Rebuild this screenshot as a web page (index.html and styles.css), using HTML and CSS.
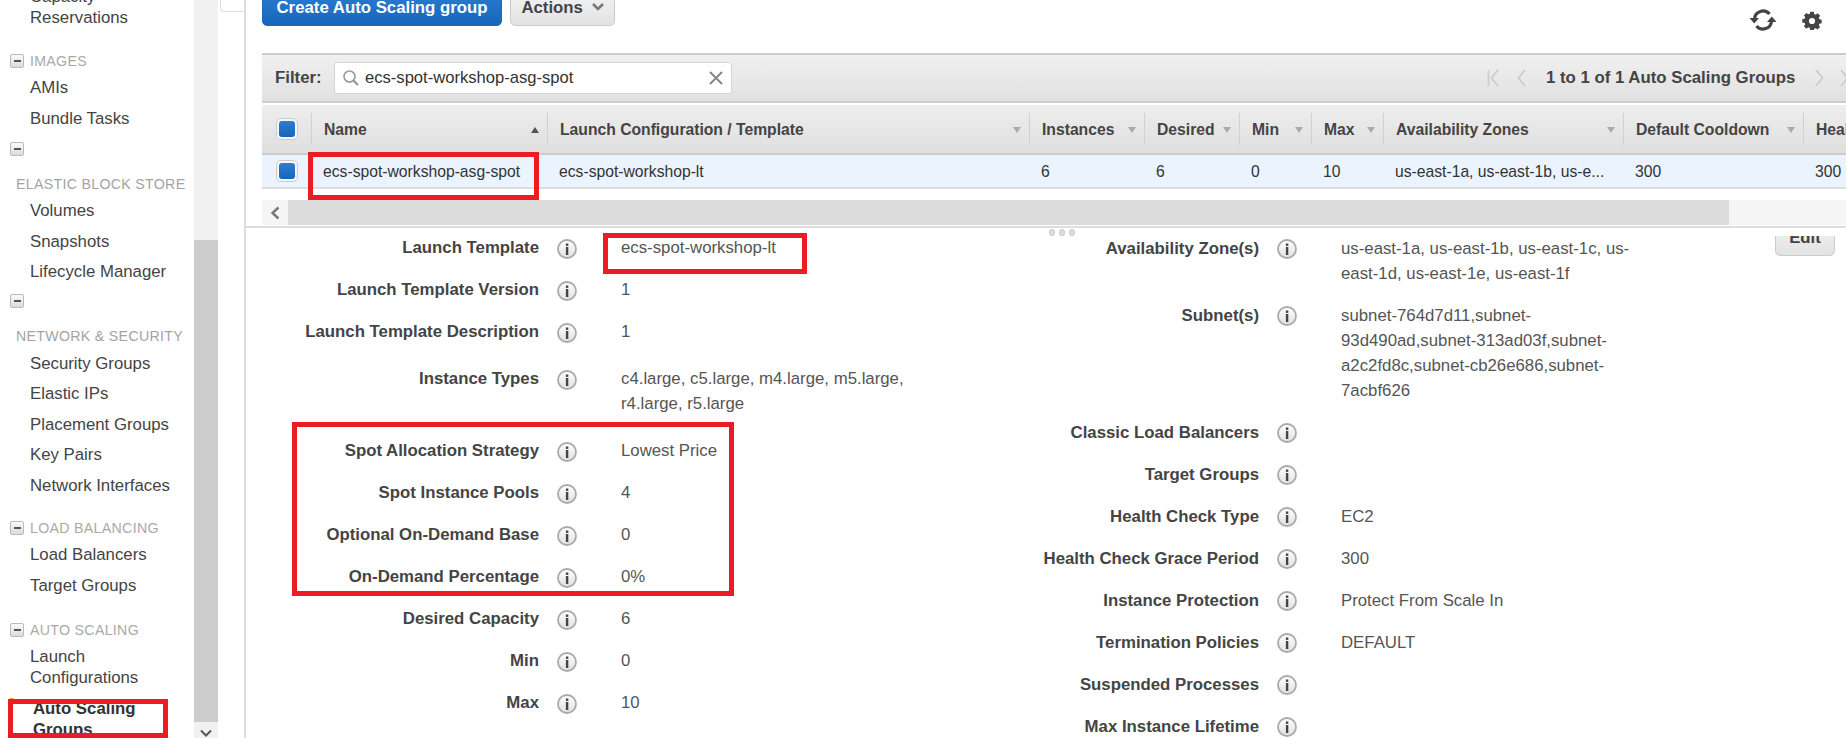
FILE: index.html
```html
<!DOCTYPE html>
<html lang="en">
<head>
<meta charset="utf-8">
<title>Auto Scaling Groups</title>
<link rel="stylesheet" href="styles.css">
</head>
<body>
<svg class="defs" width="0" height="0" aria-hidden="true">
  <defs>
    <linearGradient id="infoFill" x1="0" y1="0" x2="0" y2="1">
      <stop offset="0" stop-color="#ffffff"/>
      <stop offset="1" stop-color="#e0e0e0"/>
    </linearGradient>
    <symbol id="info" viewBox="0 0 20 20">
      <circle cx="10" cy="10" r="9" fill="url(#infoFill)" stroke="#aaaaaa" stroke-width="1.8"/>
      <rect x="8.900" y="4.500" width="2.400" height="2.400" fill="#444"/>
      <rect x="8.900" y="8" width="2.400" height="8" fill="#444"/>
    </symbol>
  </defs>
</svg>
<div class="page">
  <aside class="sidebar">
    <div class="nav">
      <div class="item">Capacity Reservations</div>

      <div class="head sec"><span class="toggle"></span><span class="head-text">IMAGES</span></div>
      <div class="item">AMIs</div>
      <div class="item">Bundle Tasks</div>

      <div class="head sec-empty"><span class="toggle"></span></div>
      <div class="title">ELASTIC BLOCK STORE</div>
      <div class="item">Volumes</div>
      <div class="item">Snapshots</div>
      <div class="item">Lifecycle Manager</div>

      <div class="head sec-tight"><span class="toggle"></span></div>
      <div class="title">NETWORK &amp; SECURITY</div>
      <div class="item">Security Groups</div>
      <div class="item">Elastic IPs</div>
      <div class="item">Placement Groups</div>
      <div class="item">Key Pairs</div>
      <div class="item">Network Interfaces</div>

      <div class="head sec-load"><span class="toggle"></span><span class="head-text">LOAD BALANCING</span></div>
      <div class="item">Load Balancers</div>
      <div class="item">Target Groups</div>

      <div class="head sec-auto"><span class="toggle"></span><span class="head-text">AUTO SCALING</span></div>
      <div class="item">Launch Configurations</div>
      <div class="item active">Auto Scaling Groups</div>
    </div>
  </aside>

  <div class="sidescroll">
    <div class="sidethumb"></div>
    <svg class="sidearrow" width="12" height="8" viewBox="0 0 12 8"><path d="M1 1.5 6 6.5 11 1.5" fill="none" stroke="#555" stroke-width="2"/></svg>
  </div>

  <div class="gutter"><div class="tabcorner"></div></div>

  <main class="main">
    <div class="toolbar">
      <button class="btn primary">Create Auto Scaling group</button>
      <button class="btn secondary">Actions
        <svg class="caret" width="12" height="8" viewBox="0 0 12 8"><path d="M1 1 6 6 11 1" fill="none" stroke="#777" stroke-width="2.6"/></svg>
      </button>
      <div class="tools">
        <svg width="28" height="26" viewBox="0 0 28 26">
          <path d="M5.500 12A8.500 8.500 0 0 1 20.500 7" fill="none" stroke="#444" stroke-width="3.200"/>
          <path d="M22.500 14A8.500 8.500 0 0 1 7.500 19" fill="none" stroke="#444" stroke-width="3.200"/>
          <path d="M0.500 11H10L5.200 16.500Z M18 15H27.500L22.800 9.500Z" fill="#444"/>
        </svg>
        <svg width="20" height="20" viewBox="0 0 20 20">
          <path fill="#444" fill-rule="evenodd" d="M8 1h4l.5 2.6 1.7.7 2.2-1.5 2.8 2.8-1.5 2.2.7 1.7 2.6.5v4l-2.6.5-.7 1.7 1.5 2.2-2.8 2.8-2.2-1.5-1.7.7L12 22H8l-.5-2.6-1.7-.7-2.2 1.5-2.8-2.8 1.5-2.2-.7-1.7L-1 13.500V9.500L1.600 9l.7-1.700L.8 5.100 3.600 2.300l2.200 1.500 1.700-.7zM10 8a3.500 3.500 0 1 0 0 7 3.500 3.500 0 0 0 0-7z" transform="translate(1.200 .9) scale(.88)"/>
        </svg>
      </div>
    </div>

    <div class="filterbar">
      <span class="filter-label">Filter:</span>
      <div class="filter-input">
        <svg width="18" height="18" viewBox="0 0 18 18"><circle cx="7.500" cy="7.500" r="5.500" fill="none" stroke="#999" stroke-width="1.600"/><path d="M11.500 11.500 16 16" stroke="#999" stroke-width="2.400"/></svg>
        <span class="filter-text">ecs-spot-workshop-asg-spot</span>
        <svg class="clear" width="14" height="14" viewBox="0 0 14 14"><path d="M1 1 13 13M13 1 1 13" stroke="#888" stroke-width="2"/></svg>
      </div>
      <div class="pager">
        <svg width="12" height="18" viewBox="0 0 12 18"><path d="M1.500 1V17M11 1 4.500 9 11 17" fill="none" stroke="#ccc" stroke-width="1.800"/></svg>
        <svg class="pg-prev" width="9" height="18" viewBox="0 0 9 18"><path d="M8 1 1.500 9 8 17" fill="none" stroke="#ccc" stroke-width="1.800"/></svg>
        <span class="pager-text">1 to 1 of 1 Auto Scaling Groups</span>
        <svg class="pg-next" width="9" height="18" viewBox="0 0 9 18"><path d="M1 1 7.500 9 1 17" fill="none" stroke="#ccc" stroke-width="1.800"/></svg>
        <svg class="pg-last" width="12" height="18" viewBox="0 0 12 18"><path d="M1 1 7.500 9 1 17M10.500 1V17" fill="none" stroke="#ccc" stroke-width="1.800"/></svg>
      </div>
    </div>

    <div class="grid-row grid-head">
      <div class="cell check"><span class="checkbox"><span class="checkmark"></span></span></div>
      <div class="cell hcell">Name<i class="sort up"></i></div>
      <div class="cell hcell">Launch Configuration / Template<i class="sort"></i></div>
      <div class="cell hcell">Instances<i class="sort"></i></div>
      <div class="cell hcell">Desired<i class="sort"></i></div>
      <div class="cell hcell">Min<i class="sort"></i></div>
      <div class="cell hcell">Max<i class="sort"></i></div>
      <div class="cell hcell">Availability Zones<i class="sort"></i></div>
      <div class="cell hcell">Default Cooldown<i class="sort"></i></div>
      <div class="cell hcell last">Health Check Grace</div>
    </div>
    <div class="grid-row grid-body">
      <div class="cell check"><span class="checkbox"><span class="checkmark"></span></span></div>
      <div class="cell">ecs-spot-workshop-asg-spot</div>
      <div class="cell">ecs-spot-workshop-lt</div>
      <div class="cell">6</div>
      <div class="cell">6</div>
      <div class="cell">0</div>
      <div class="cell">10</div>
      <div class="cell">us-east-1a, us-east-1b, us-e...</div>
      <div class="cell">300</div>
      <div class="cell">300</div>
    </div>

    <div class="hscroll">
      <div class="hscroll-btn"><svg width="10" height="14" viewBox="0 0 10 14"><path d="M8.500 1.500 2.500 7 8.500 12.500" fill="none" stroke="#777" stroke-width="2.400"/></svg></div>
      <div class="hscroll-thumb"></div>
    </div>

    <section class="detail">
      <div class="dots"><i></i><i></i><i></i></div>
      <div class="col col-left">
        <div class="kv"><span class="k">Launch Template</span><span class="ic"><svg><use href="#info"/></svg></span><span class="v">ecs-spot-workshop-lt</span></div>
        <div class="kv"><span class="k">Launch Template Version</span><span class="ic"><svg><use href="#info"/></svg></span><span class="v">1</span></div>
        <div class="kv"><span class="k">Launch Template Description</span><span class="ic"><svg><use href="#info"/></svg></span><span class="v">1</span></div>
        <div class="kv spaced"><span class="k">Instance Types</span><span class="ic"><svg><use href="#info"/></svg></span><span class="v">c4.large, c5.large, m4.large, m5.large,<br>r4.large, r5.large</span></div>
        <div class="kv"><span class="k">Spot Allocation Strategy</span><span class="ic"><svg><use href="#info"/></svg></span><span class="v">Lowest Price</span></div>
        <div class="kv"><span class="k">Spot Instance Pools</span><span class="ic"><svg><use href="#info"/></svg></span><span class="v">4</span></div>
        <div class="kv"><span class="k">Optional On-Demand Base</span><span class="ic"><svg><use href="#info"/></svg></span><span class="v">0</span></div>
        <div class="kv"><span class="k">On-Demand Percentage</span><span class="ic"><svg><use href="#info"/></svg></span><span class="v">0%</span></div>
        <div class="kv"><span class="k">Desired Capacity</span><span class="ic"><svg><use href="#info"/></svg></span><span class="v">6</span></div>
        <div class="kv"><span class="k">Min</span><span class="ic"><svg><use href="#info"/></svg></span><span class="v">0</span></div>
        <div class="kv"><span class="k">Max</span><span class="ic"><svg><use href="#info"/></svg></span><span class="v">10</span></div>
      </div>
      <div class="col col-right">
        <div class="kv"><span class="k">Availability Zone(s)</span><span class="ic"><svg><use href="#info"/></svg></span><span class="v">us-east-1a, us-east-1b, us-east-1c, us-<br>east-1d, us-east-1e, us-east-1f</span></div>
        <div class="kv"><span class="k">Subnet(s)</span><span class="ic"><svg><use href="#info"/></svg></span><span class="v">subnet-764d7d11,subnet-<br>93d490ad,subnet-313ad03f,subnet-<br>a2c2fd8c,subnet-cb26e686,subnet-<br>7acbf626</span></div>
        <div class="kv"><span class="k">Classic Load Balancers</span><span class="ic"><svg><use href="#info"/></svg></span><span class="v"></span></div>
        <div class="kv"><span class="k">Target Groups</span><span class="ic"><svg><use href="#info"/></svg></span><span class="v"></span></div>
        <div class="kv"><span class="k">Health Check Type</span><span class="ic"><svg><use href="#info"/></svg></span><span class="v">EC2</span></div>
        <div class="kv"><span class="k">Health Check Grace Period</span><span class="ic"><svg><use href="#info"/></svg></span><span class="v">300</span></div>
        <div class="kv"><span class="k">Instance Protection</span><span class="ic"><svg><use href="#info"/></svg></span><span class="v">Protect From Scale In</span></div>
        <div class="kv"><span class="k">Termination Policies</span><span class="ic"><svg><use href="#info"/></svg></span><span class="v">DEFAULT</span></div>
        <div class="kv"><span class="k">Suspended Processes</span><span class="ic"><svg><use href="#info"/></svg></span><span class="v"></span></div>
        <div class="kv"><span class="k">Max Instance Lifetime</span><span class="ic"><svg><use href="#info"/></svg></span><span class="v"></span></div>
      </div>
      <div class="edit-clip"><button class="btn secondary edit">Edit</button></div>
    </section>
  </main>

  <div class="mark mark-side"></div>
  <div class="mark mark-name"></div>
  <div class="mark mark-lt"></div>
  <div class="mark mark-spot"></div>
</div>
</body>
</html>
```

FILE: styles.css
```css
* { box-sizing: border-box; }
html, body { margin: 0; padding: 0; background: #fff; }
body { font-family: "Liberation Sans", Arial, sans-serif; font-size: 16.8px; color: #444; }
.defs { position: absolute; }
.page { position: relative; display: flex; width: 1846px; height: 738px; overflow: hidden; }

/* sidebar */
.sidebar { flex: none; width: 194px; overflow: hidden; }
.nav { margin-top: -14.5px; }
.item { padding: 0 8px 0 30px; width: 182px; line-height: 21px; margin-bottom: 9.500px; color: #444; }
.item.active { margin-left: 10px; padding-left: 20px; width: 172px; border-left: 3px solid #f90; font-weight: 700; color: #333; }
.head { display: flex; align-items: center; height: 20px; padding-left: 10px; gap: 6px; margin-bottom: 6.500px; }
.head.sec { margin-top: 23px; }
.head.sec-empty { margin-top: 10px; }
.head.sec-tight { margin-top: -.5px; }
.head.sec-load { margin-top: 22px; }
.head.sec-auto { margin-top: 24px; }
.head-text { font-size: 14.200px; letter-spacing: .3px; color: #aaa; }
.head + .title { margin-top: 15px; }
.title { height: 20px; line-height: 20px; padding-left: 16px; font-size: 14.200px; letter-spacing: .3px; color: #a4a4a4; white-space: nowrap; margin-bottom: 6.500px; }
.toggle { position: relative; flex: none; width: 14px; height: 14px; border: 1px solid #bbb; border-radius: 2px; background: linear-gradient(#fafafa, #dcdcdc); }
.toggle::after { content: ""; position: absolute; left: 2.500px; top: 5px; width: 7px; height: 2px; background: #555; }

.sidescroll { flex: none; width: 24px; background: #f1f1f1; display: flex; flex-direction: column; align-items: center; }
.sidethumb { width: 100%; height: 482px; margin-top: 240px; background: #ccc; }
.sidearrow { margin-top: 7px; }

.gutter { flex: none; width: 26px; }
.tabcorner { height: 12px; margin-left: 2px; border: 1px solid #ddd; border-top: 0; border-right: 0; border-bottom-left-radius: 4px; }

/* main */
.main { flex: 1; min-width: 0; border-left: 2px solid #ddd; padding-left: 16px; overflow: hidden; }
.toolbar { display: flex; align-items: flex-start; height: 53px; gap: 8px; }
.btn { font-family: inherit; font-size: 16.800px; font-weight: 700; height: 36px; margin-top: -10px; border-radius: 5px; padding: 0 14px; white-space: nowrap; cursor: pointer; }
.btn.primary { flex: none; width: 240px; padding: 0; color: #fff; background: linear-gradient(#2d7dd2, #1565ba); border: 1px solid #1a69be; }
.btn.secondary { color: #444; background: linear-gradient(#f4f4f4, #e2e2e2); border: 1px solid #ccc; }
.caret { margin-left: 4px; vertical-align: 2px; }
.toolbar .btn.secondary { flex: none; width: 105px; padding: 0; }
.tools { margin-left: auto; margin-top: 7px; margin-right: 24px; display: flex; align-items: center; gap: 25px; }

.filterbar { display: flex; align-items: center; height: 50px; padding-left: 13px; background: linear-gradient(#f0f0f0, #e1e1e1); border-top: 2px solid #ccc; border-bottom: 2px solid #ccc; }
.filter-label { flex: none; font-weight: 700; width: 59px; }
.filter-input { flex: none; display: flex; align-items: center; width: 398px; height: 32px; padding: 0 8px 0 7px; background: #fff; border: 1px solid #d4d4d4; border-radius: 3px; }
.filter-text { flex: 1; margin-left: 5px; font-size: 16.600px; color: #333; }
.pager { flex: none; display: flex; align-items: center; margin-left: 755px; white-space: nowrap; }
.pg-prev { margin-left: 18px; }
.pager-text { font-weight: 700; margin-left: 20px; width: 250px; }
.pg-next { margin-left: 19px; }
.pg-last { margin-left: 16px; flex: none; }

.grid-row { display: grid; grid-template-columns: 49px 236px 482px 115px 95px 72px 72px 240px 180px 100px; width: 1641px; font-size: 15.700px; }
.grid-head { height: 50px; margin-top: 2px; background: linear-gradient(#eeeeee, #dfdfdf); border-bottom: 2px solid #ccc; font-weight: 700; align-items: center; }
.grid-body { height: 34px; background: #eaf3fe; border-bottom: 2px solid #ddd; align-items: center; color: #333; }
.cell { padding-left: 12px; white-space: nowrap; overflow: hidden; }
.grid-body .cell { padding-top: 1px; }
.grid-body .cell.check, .grid-head .cell.check { padding: 0 0 0 14px; }
.hcell { display: flex; align-items: center; justify-content: space-between; height: 32px; padding-top: 2px; padding-right: 8px; border-left: 1px solid #d0d0d0; }
.hcell.last { justify-content: flex-start; }
.sort { flex: none; width: 0; height: 0; border: 4px solid transparent; border-top: 6px solid #aaa; border-bottom: 0; }
.sort.up { border-top: 0; border-bottom: 6px solid #555; }
.check { display: flex; align-items: center; }
.checkbox { display: flex; align-items: center; justify-content: center; width: 22px; height: 22px; background: #f6f6f6; border: 1px solid #ccc; border-radius: 5px; }
.checkmark { width: 16px; height: 16px; border-radius: 3px; background: linear-gradient(#2d7dd2, #1565ba); }

.hscroll { display: flex; height: 25px; margin-top: 11px; background: #f5f5f5; width: 1584px; }
.hscroll-btn { display: flex; align-items: center; justify-content: center; flex: none; width: 26px; }
.hscroll-thumb { width: 1441px; background: #dbdbdb; }

/* detail */
.detail { position: relative; display: flex; margin: 1px 0 0 -16px; padding: 8px 0 0 16px; border-top: 2px solid #ddd; }
.dots { position: absolute; left: 803px; top: 1px; display: flex; gap: 4px; }
.dots i { width: 6px; height: 7px; border-radius: 50%; background: #ddd; border: 1px solid #ccc; }
.col { flex: none; }
.col-left { width: 708px; margin-top: -1px; }
.col-right { width: 805px; }
.kv { display: grid; line-height: 25px; padding-bottom: 17px; }
.col-left .kv { grid-template-columns: 277px 82px 1fr; }
.col-right .kv { grid-template-columns: 289px 82px 1fr; }
.kv.spaced { margin-top: 5px; margin-bottom: 5px; }
.k { text-align: right; font-weight: 700; color: #444; }
.ic { display: block; padding: 3px 0 0 18px; line-height: 0; }
.col-left .ic { padding-top: 4px; }
.ic svg { width: 20px; height: 20px; }
.v { color: #555; white-space: nowrap; min-height: 25px; }
.edit-clip { flex: none; width: 60px; height: 20px; overflow: hidden; }
.btn.edit { display: block; width: 60px; height: 36px; margin-top: -16px; padding: 0; }

/* red annotation boxes */
.mark { position: absolute; border: 5px solid #ed1c24; }
.mark-side { left: 8px; top: 699px; width: 160px; height: 39px; }
.mark-name { left: 308px; top: 152px; width: 231px; height: 48px; }
.mark-lt { left: 603px; top: 233px; width: 204px; height: 41px; }
.mark-spot { left: 292px; top: 422px; width: 442px; height: 174px; }
```
